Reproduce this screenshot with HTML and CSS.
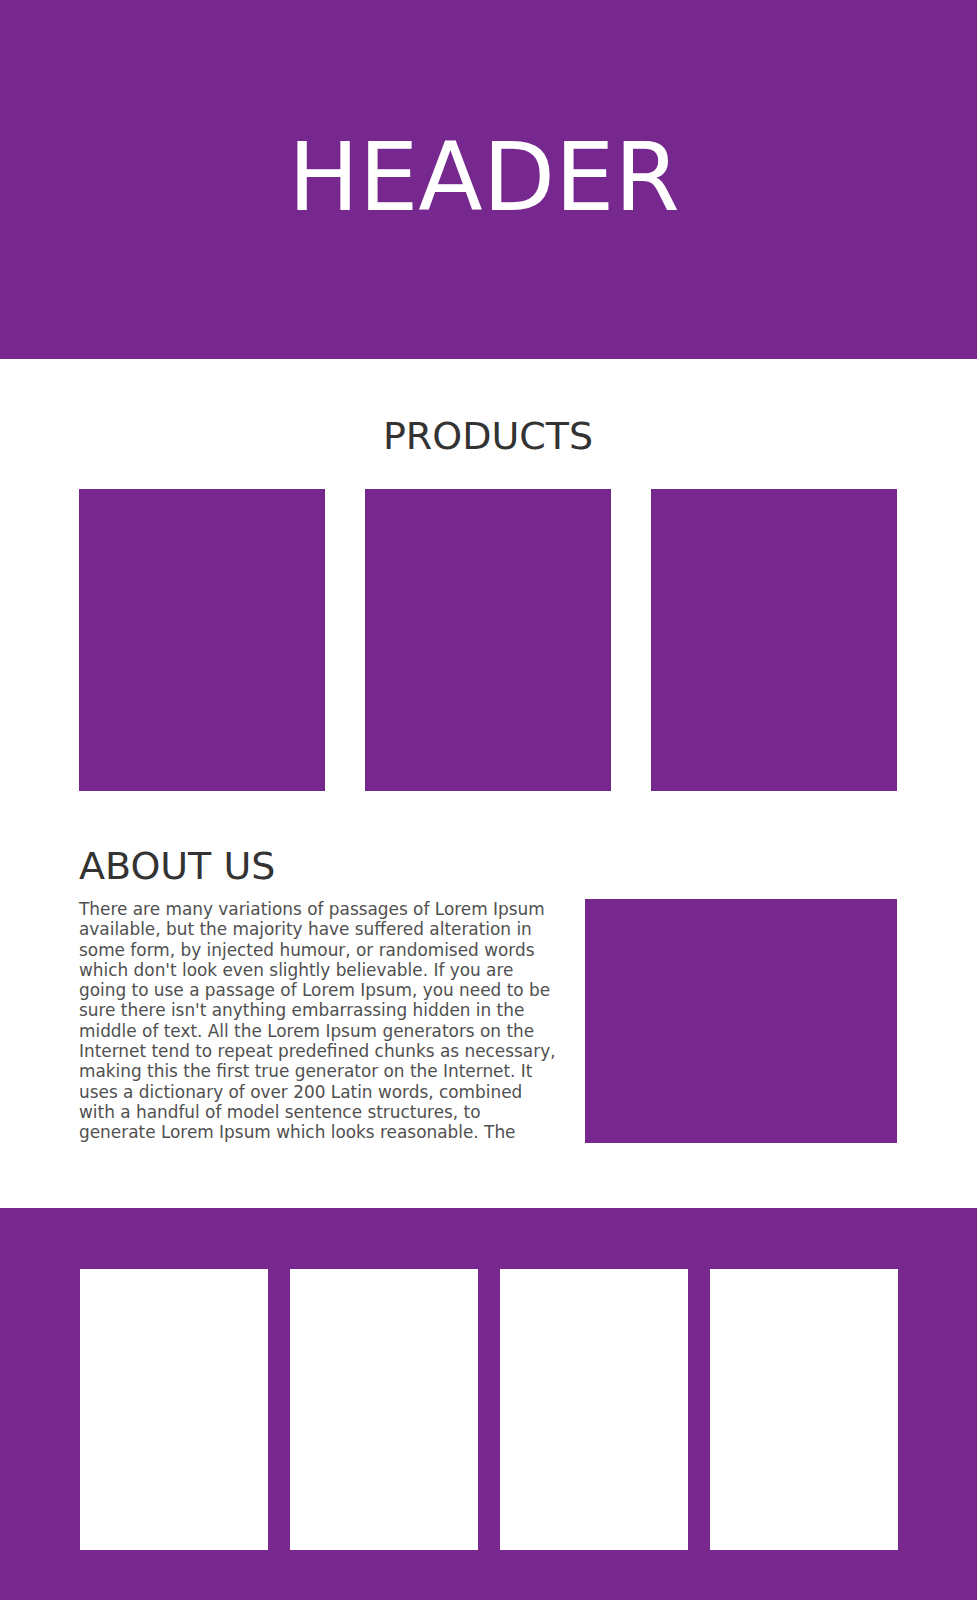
FILE: index.html
```html
<!DOCTYPE html>
<html lang="en">
<head>
<meta charset="utf-8">
<title>Page</title>
<link rel="stylesheet" href="styles.css">
</head>
<body>
<header class="site-header">
  <h1 class="site-title">HEADER</h1>
</header>
<main class="wrap">
  <section class="products">
    <h2 class="section-title center">PRODUCTS</h2>
    <div class="product-grid">
      <div class="product"></div>
      <div class="product"></div>
      <div class="product"></div>
    </div>
  </section>
  <section class="about">
    <h2 class="section-title">ABOUT US</h2>
    <div class="about-row">
      <p class="about-text">There are many variations of passages of Lorem Ipsum available, but the majority have suffered alteration in some form, by injected humour, or randomised words which don't look even slightly believable. If you are going to use a passage of Lorem Ipsum, you need to be sure there isn't anything embarrassing hidden in the middle of text. All the Lorem Ipsum generators on the Internet tend to repeat predefined chunks as necessary, making this the first true generator on the Internet. It uses a dictionary of over 200 Latin words, combined with a handful of model sentence structures, to generate Lorem Ipsum which looks reasonable. The</p>
      <div class="about-image"></div>
    </div>
  </section>
</main>
<footer class="site-footer">
  <div class="footer-grid">
    <div class="footer-card"></div>
    <div class="footer-card"></div>
    <div class="footer-card"></div>
    <div class="footer-card"></div>
  </div>
</footer>
</body>
</html>
```
FILE: styles.css
```css
* { box-sizing: border-box; }

html, body {
  margin: 0;
  padding: 0;
  background: #ffffff;
  font-family: "DejaVu Sans", sans-serif;
}

.site-header {
  background: #77288f;
  height: 359px;
  padding: 123px 9px 0 0;
  text-align: center;
}

.site-title {
  margin: 0;
  font-size: 94px;
  font-weight: normal;
  line-height: normal;
  color: #ffffff;
}

.wrap {
  padding: 0 80px 0 79px;
}

.section-title {
  margin: 0;
  font-size: 38px;
  font-weight: normal;
  line-height: 44px;
  color: #333333;
}

.center { text-align: center; }

.products .section-title {
  margin-top: 55px;
  margin-bottom: 31px;
}

.product-grid {
  display: grid;
  grid-template-columns: repeat(3, 1fr);
  gap: 40px;
}

.product {
  height: 302px;
  background: #77288f;
}

.about {
  margin-top: 53px;
}

.about .section-title {
  margin-bottom: 11px;
}

.about-row {
  display: grid;
  grid-template-columns: 1fr 312px;
  column-gap: 27px;
  height: 244px;
}

.about-text {
  margin: 0;
  font-size: 16.9px;
  line-height: 20.3px;
  color: #505050;
}

.about-image {
  background: #77288f;
  height: 244px;
}

.site-footer {
  margin-top: 65px;
  background: #77288f;
  padding: 61px 79px 50px 80px;
}

.footer-grid {
  display: grid;
  grid-template-columns: repeat(4, 1fr);
  gap: 22px;
}

.footer-card {
  height: 281px;
  background: #ffffff;
}
```
